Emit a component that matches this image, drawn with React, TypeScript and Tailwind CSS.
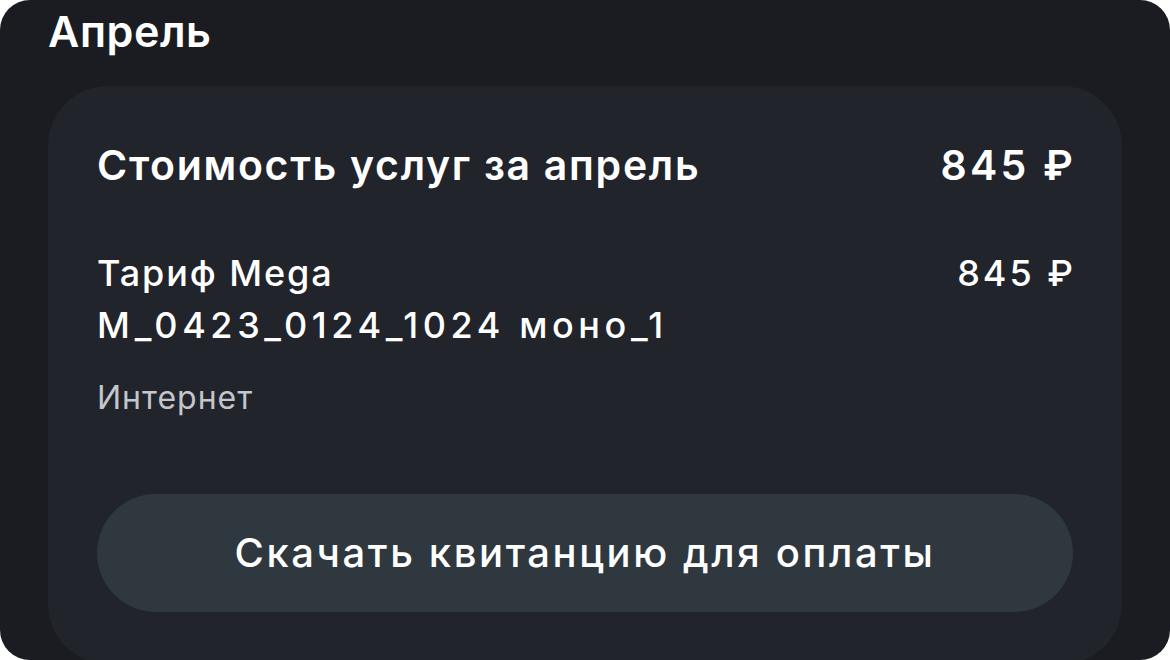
import React from 'react';

export default function App() {
  return (
    <div className="w-[1170px] h-[660px] bg-white" style={{ fontFamily: 'Inter, "Noto Sans", sans-serif' }}>
      <div className="h-full rounded-[30px] bg-[#1a1c22] overflow-hidden flex flex-col">
        {/* Month header */}
        <h2 className="pl-[48px] pt-[5px] h-[86px] text-[43px] leading-[52px] font-semibold text-white tracking-[0.6px]">
          Апрель
        </h2>

        {/* Bill card */}
        <div className="flex-1 mx-[48px] mb-[-4px] rounded-[60px] bg-[#22242b] px-[49px] pt-[51px]">
          <div className="flex items-center justify-between text-[41px] leading-[56px] font-semibold text-white">
            <span className="tracking-[1.7px]">Стоимость услуг за апрель</span>
            <span className="tracking-[3.2px] mr-[-3px]">845 ₽</span>
          </div>

          <div className="flex items-start justify-between mt-[54px] text-[36px] leading-[52px] font-medium text-white">
            <div>
              <div className="tracking-[1.9px]">Тариф Mega</div>
              <div className="tracking-[4.6px]">M_0423_0124_1024 моно_1</div>
            </div>
            <span className="tracking-[3px] mr-[-3px]">845 ₽</span>
          </div>

          <div className="mt-[27px] text-[32px] leading-[40px] text-[#c3c6cc] tracking-[1px]">Интернет</div>

          <button className="mt-[76px] w-full h-[118px] rounded-full bg-[#2f383f] text-[40px] font-medium text-white tracking-[2.6px]">
            Скачать квитанцию для оплаты
          </button>
        </div>
      </div>
    </div>
  );
}
